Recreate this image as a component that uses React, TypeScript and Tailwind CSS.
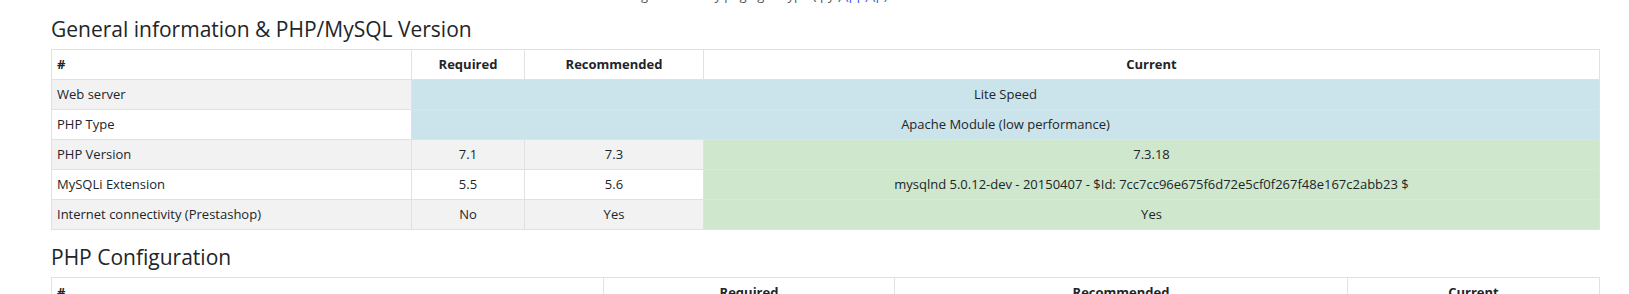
import React from "react";

const font = { fontFamily: '"Open Sans", "Liberation Sans", sans-serif' };

function Th({ children, left }: { children?: React.ReactNode; left?: boolean }) {
  return (
    <th
      className={`border border-[#dee2e6] px-[5px] py-[5px] text-[13px] leading-[19px] font-bold text-[#212529] ${
        left ? "text-left" : "text-center"
      }`}
    >
      {children}
    </th>
  );
}

function Td({
  children,
  left,
  bg,
  colSpan,
}: {
  children?: React.ReactNode;
  left?: boolean;
  bg?: string;
  colSpan?: number;
}) {
  return (
    <td
      colSpan={colSpan}
      className={`border border-[#dee2e6] px-[5px] py-[5px] text-[13px] leading-[19px] text-[#212529] ${
        left ? "text-left" : "text-center"
      } ${bg ?? ""}`}
    >
      {children}
    </td>
  );
}

export default function App() {
  const grey = "bg-[#f2f2f2]";
  const blue = "bg-[#cbe3ea]";
  const green = "bg-[#cee7cd]";
  return (
    <div className="w-[1629px] h-[294px] overflow-hidden bg-white pl-[51px]" style={font}>
      <div className="h-[17px] overflow-hidden">
        <div className="mt-[-14px] ml-[590px] text-[13px] leading-[19px] text-[#555]">
          generated by page gen type ( py ) <span className="text-[#3b5bdb]">(pp) (p)</span>
        </div>
      </div>
      <h3 className="text-[21px] leading-[25px] font-normal text-[#212529] mb-[7px]">
        General information &amp; PHP/MySQL Version
      </h3>
      <table className="w-[1548px] table-fixed border-collapse">
        <colgroup>
          <col className="w-[360px]" />
          <col className="w-[113px]" />
          <col className="w-[179px]" />
          <col className="w-[896px]" />
        </colgroup>
        <thead>
          <tr>
            <Th left>#</Th>
            <Th>Required</Th>
            <Th>Recommended</Th>
            <Th>Current</Th>
          </tr>
        </thead>
        <tbody>
          <tr>
            <Td left bg={grey}>Web server</Td>
            <Td colSpan={3} bg={blue}>Lite Speed</Td>
          </tr>
          <tr>
            <Td left>PHP Type</Td>
            <Td colSpan={3} bg={blue}>Apache Module (low performance)</Td>
          </tr>
          <tr>
            <Td left bg={grey}>PHP Version</Td>
            <Td bg={grey}>7.1</Td>
            <Td bg={grey}>7.3</Td>
            <Td bg={green}>7.3.18</Td>
          </tr>
          <tr>
            <Td left>MySQLi Extension</Td>
            <Td>5.5</Td>
            <Td>5.6</Td>
            <Td bg={green}>
              mysqlnd 5.0.12-dev - 20150407 - $Id: 7cc7cc96e675f6d72e5cf0f267f48e167c2abb23 $
            </Td>
          </tr>
          <tr>
            <Td left bg={grey}>Internet connectivity (Prestashop)</Td>
            <Td bg={grey}>No</Td>
            <Td bg={grey}>Yes</Td>
            <Td bg={green}>Yes</Td>
          </tr>
        </tbody>
      </table>
      <h3 className="text-[21px] leading-[25px] font-normal text-[#212529] mt-[15px] mb-[7px]">
        PHP Configuration
      </h3>
      <table className="w-[1548px] table-fixed border-collapse">
        <colgroup>
          <col className="w-[552px]" />
          <col className="w-[291px]" />
          <col className="w-[453px]" />
          <col className="w-[252px]" />
        </colgroup>
        <thead>
          <tr>
            <Th left>#</Th>
            <Th>Required</Th>
            <Th>Recommended</Th>
            <Th>Current</Th>
          </tr>
        </thead>
      </table>
    </div>
  );
}
